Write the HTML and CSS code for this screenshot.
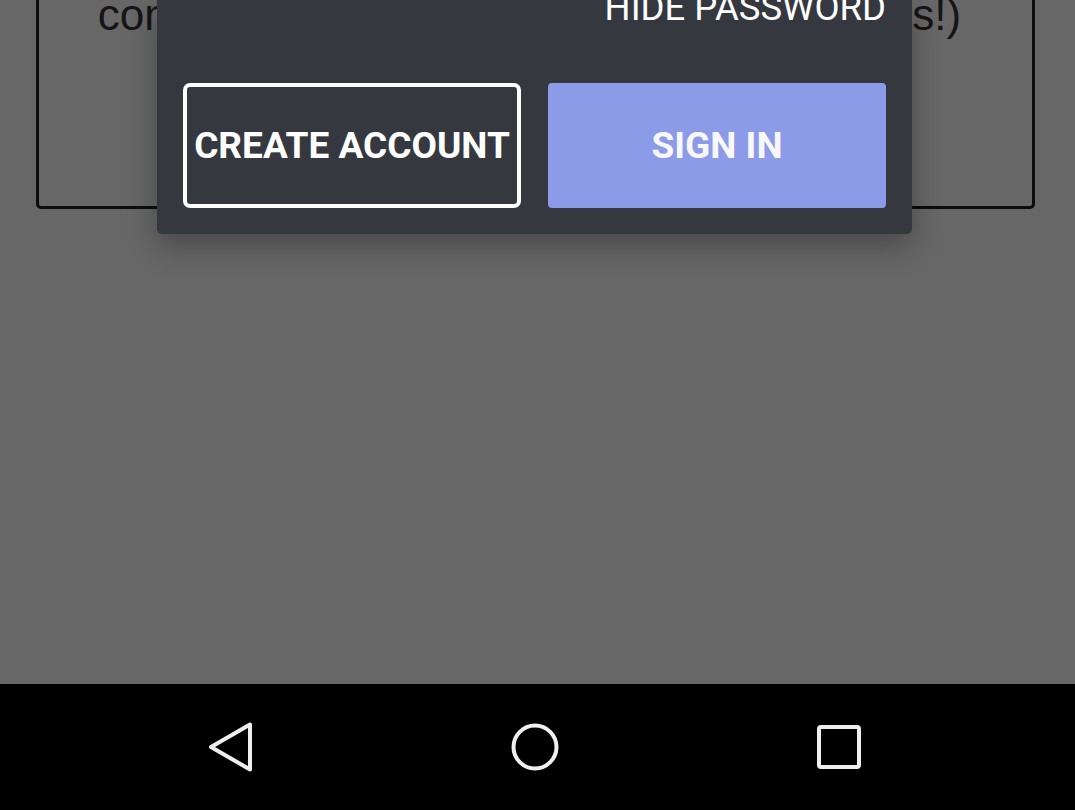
FILE: index.html
```html
<!DOCTYPE html>
<html>
<head>
<meta charset="utf-8">
<link rel="stylesheet" href="styles.css">
</head>
<body>
<div class="screen">
  <main class="content">
    <div class="card">
      <p class="card-text">connect and share with your pals (and pals!)</p>
    </div>
    <section class="dialog">
      <div class="toggle-row"><span class="toggle">HIDE PASSWORD</span></div>
      <div class="actions">
        <button class="btn btn-outline">CREATE ACCOUNT</button>
        <button class="btn btn-primary">SIGN IN</button>
      </div>
    </section>
  </main>
  <nav class="navbar">
    <div class="nav-slot">
      <svg width="48" height="52" viewBox="0 0 48 52"><path d="M4 26 L43 3.5 L43 48.5 Z" fill="none" stroke="#efefef" stroke-width="4" stroke-linejoin="round"/></svg>
    </div>
    <div class="nav-slot">
      <svg width="52" height="52" viewBox="0 0 52 52"><circle cx="26" cy="26" r="21.5" fill="none" stroke="#efefef" stroke-width="4"/></svg>
    </div>
    <div class="nav-slot">
      <svg width="46" height="46" viewBox="0 0 46 46"><rect x="3" y="3" width="40" height="40" rx="2" fill="none" stroke="#efefef" stroke-width="4"/></svg>
    </div>
  </nav>
</div>
</body>
</html>
```

FILE: styles.css
```css
html, body {
  margin: 0;
  padding: 0;
}
body {
  width: 1075px;
  height: 810px;
  overflow: hidden;
  background: #676767;
  font-family: Roboto, "Liberation Sans", sans-serif;
}
.screen {
  display: flex;
  flex-direction: column;
  height: 810px;
}
.content {
  position: relative;
  height: 684px;
  padding: 0 40px 0 36px;
  box-sizing: border-box;
}
.card {
  margin-top: -60px;
  height: 269px;
  box-sizing: border-box;
  border: 3px solid #0d0d0d;
  border-radius: 5px;
  display: flex;
  justify-content: center;
}
.card-text {
  margin: 0;
  padding: 47px 12px 0 0;
  font-family: "Liberation Sans", Arial, sans-serif;
  font-size: 44px;
  line-height: 50px;
  color: #151515;
  white-space: nowrap;
}
.dialog {
  position: absolute;
  left: 157px;
  top: 0;
  width: 755px;
  box-sizing: border-box;
  padding: 0 26px 26px;
  background: #363840;
  border-radius: 0 0 5px 5px;
  box-shadow: 0 12px 30px rgba(0, 0, 0, 0.3);
}
.toggle-row {
  display: flex;
  justify-content: flex-end;
  margin-top: -10px;
  height: 36px;
}
.toggle {
  font-size: 36.5px;
  line-height: 36px;
  color: #ffffff;
}
.actions {
  display: flex;
  gap: 27px;
  margin-top: 57px;
}
.btn {
  width: 338px;
  height: 125px;
  box-sizing: border-box;
  font-family: Roboto, "Liberation Sans", sans-serif;
  font-weight: 700;
  font-size: 37px;
  color: #ffffff;
  display: flex;
  align-items: center;
  justify-content: center;
  padding: 0;
  white-space: nowrap;
}
.btn-outline {
  background: #363840;
  border: 4px solid #ffffff;
  border-radius: 7px;
}
.btn-primary {
  background: #8c9be8;
  border: none;
  border-radius: 4px;
  color: #f8f8fc;
}
.navbar {
  height: 126px;
  background: #000;
  display: flex;
  justify-content: center;
  gap: 178px;
  padding-right: 5px;
}
.nav-slot {
  width: 126px;
  display: flex;
  align-items: center;
  justify-content: center;
}
```
